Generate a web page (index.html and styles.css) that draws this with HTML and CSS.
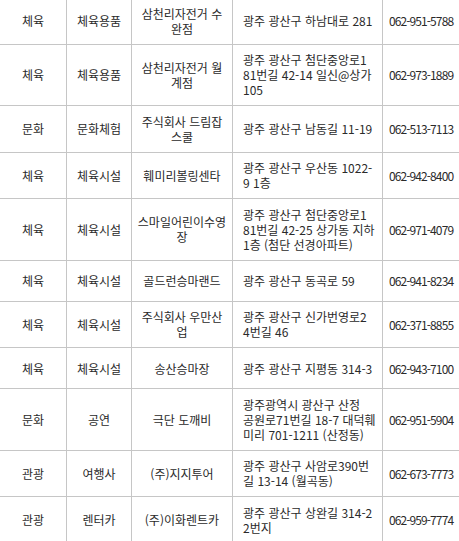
FILE: index.html
```html
<!DOCTYPE html>
<html lang="ko">
<head>
<meta charset="utf-8">
<link rel="stylesheet" href="styles.css">
</head>
<body>
<table class="list">
  <colgroup>
    <col class="c1"><col class="c2"><col class="c3"><col class="c4"><col class="c5">
  </colgroup>
  <tbody>
    <tr><td>체육</td><td>체육용품</td><td>삼천리자전거 수<br>완점</td><td class="addr">광주 광산구 하남대로 281</td><td class="tel">062-951-5788</td></tr>
    <tr><td>체육</td><td>체육용품</td><td>삼천리자전거 월<br>계점</td><td class="addr">광주 광산구 첨단중앙로1<br>81번길 42-14 일신@상가<br>105</td><td class="tel">062-973-1889</td></tr>
    <tr><td>문화</td><td>문화체험</td><td>주식회사 드림잡<br>스쿨</td><td class="addr">광주 광산구 남동길 11-19</td><td class="tel">062-513-7113</td></tr>
    <tr><td>체육</td><td>체육시설</td><td>훼미리볼링센타</td><td class="addr">광주 광산구 우산동 1022-<br>9 1층</td><td class="tel">062-942-8400</td></tr>
    <tr><td>체육</td><td>체육시설</td><td>스마일어린이수영<br>장</td><td class="addr">광주 광산구 첨단중앙로1<br>81번길 42-25 상가동 지하<br>1층 (첨단 선경아파트)</td><td class="tel">062-971-4079</td></tr>
    <tr><td>체육</td><td>체육시설</td><td>골드런승마랜드</td><td class="addr">광주 광산구 동곡로 59</td><td class="tel">062-941-8234</td></tr>
    <tr><td>체육</td><td>체육시설</td><td>주식회사 우만산<br>업</td><td class="addr">광주 광산구 신가번영로2<br>4번길 46</td><td class="tel">062-371-8855</td></tr>
    <tr><td>체육</td><td>체육시설</td><td>송산승마장</td><td class="addr">광주 광산구 지평동 314-3</td><td class="tel">062-943-7100</td></tr>
    <tr><td>문화</td><td>공연</td><td>극단 도깨비</td><td class="addr">광주광역시 광산구 산정<br>공원로71번길 18-7 대덕훼<br>미리 701-1211 (산정동)</td><td class="tel">062-951-5904</td></tr>
    <tr><td>관광</td><td>여행사</td><td>(주)지지투어</td><td class="addr">광주 광산구 사암로390번<br>길 13-14 (월곡동)</td><td class="tel">062-673-7773</td></tr>
    <tr><td>관광</td><td>렌터카</td><td>(주)이화렌트카</td><td class="addr">광주 광산구 상완길 314-2<br>2번지</td><td class="tel">062-959-7774</td></tr>
  </tbody>
</table>
</body>
</html>
```

FILE: styles.css
```css
html, body {
  margin: 0;
  padding: 0;
  background: #fff;
  overflow: hidden;
}
.list {
  border-collapse: separate;
  border-spacing: 0;
  table-layout: fixed;
  width: 459px;
  margin-top: -2px;
  font-family: "Noto Sans CJK KR", "Noto Sans", sans-serif;
  font-size: 12px;
  line-height: 15px;
  color: #2a2a2a;
}
.c1 { width: 67px; }
.c2 { width: 65px; }
.c3 { width: 101px; }
.c4 { width: 150px; }
.c5 { width: 76px; }
.list tr { height: 41px; }
.list td {
  box-sizing: border-box;
  padding: 7.75px 2px;
  border-right: 1px solid #c6c6c6;
  border-bottom: 1px solid #c6c6c6;
  text-align: center;
  vertical-align: middle;
  white-space: nowrap;
}
.list td.addr {
  text-align: left;
  padding-left: 10px;
  padding-right: 2px;
}
.list td.tel {
  border-right: none;
  padding-left: 6px;
  padding-right: 0;
  text-align: left;
  letter-spacing: -0.9px;
}
```
